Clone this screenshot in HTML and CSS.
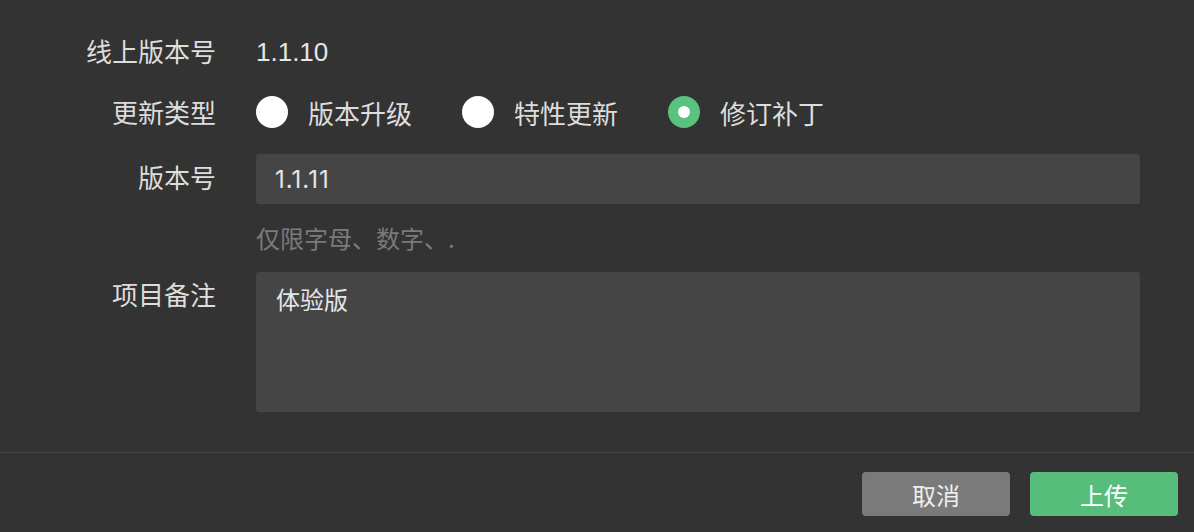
FILE: index.html
```html
<!DOCTYPE html>
<html lang="zh-CN">
<head>
<meta charset="utf-8">
<title>上传</title>
<link rel="stylesheet" href="styles.css">
</head>
<body>
<div class="dialog">
  <div class="form">
    <div class="row row-online">
      <div class="label">线上版本号</div>
      <div class="value">1.1.10</div>
    </div>
    <div class="row row-type">
      <div class="label">更新类型</div>
      <div class="radios">
        <label class="radio"><span class="dot"></span><span class="radio-text">版本升级</span></label>
        <label class="radio"><span class="dot"></span><span class="radio-text">特性更新</span></label>
        <label class="radio checked"><span class="dot"></span><span class="radio-text">修订补丁</span></label>
      </div>
    </div>
    <div class="row row-version">
      <div class="label">版本号</div>
      <div class="field">
        <input class="input" type="text" value="1.1.11">
        <div class="hint">仅限字母、数字、.</div>
      </div>
    </div>
    <div class="row row-note">
      <div class="label">项目备注</div>
      <div class="field">
        <textarea class="textarea">体验版</textarea>
      </div>
    </div>
  </div>
  <div class="footer">
    <button class="btn btn-cancel">取消</button>
    <button class="btn btn-primary">上传</button>
  </div>
</div>
</body>
</html>
```

FILE: styles.css
```css
html, body {
  margin: 0;
  padding: 0;
  background: #333333;
}
body {
  width: 1194px;
  height: 532px;
  overflow: hidden;
  font-family: "Noto Sans CJK SC", "Noto Sans", sans-serif;
  color: #e2e2e2;
}
.dialog {
  display: flex;
  flex-direction: column;
}
.form {
  display: flex;
  flex-direction: column;
  padding: 32px 54px 0 0;
}
.row {
  display: flex;
  align-items: flex-start;
  gap: 40px;
}
.label {
  width: 216px;
  flex: none;
  text-align: right;
  font-size: 26px;
  line-height: 40px;
  color: #dddddd;
}
.row-online .label {
  margin-top: -1px;
}
.row-online .value {
  font-family: "Liberation Sans", Arial, sans-serif;
  font-size: 26px;
  line-height: 40px;
  color: #e6e6e6;
}
.row-type {
  margin-top: 20px;
  margin-bottom: 2px;
}
.radios {
  display: flex;
  align-items: center;
  height: 40px;
  gap: 50px;
}
.radio {
  display: flex;
  align-items: center;
  gap: 20px;
  font-size: 26px;
  color: #dddddd;
}
.dot {
  width: 32px;
  height: 32px;
  border-radius: 50%;
  background: #ffffff;
  box-sizing: border-box;
  display: flex;
  align-items: center;
  justify-content: center;
}
.radio.checked .dot {
  background: #5ac17e;
}
.radio.checked .dot::after {
  content: "";
  width: 12px;
  height: 12px;
  border-radius: 50%;
  background: #ffffff;
}
.row-version {
  margin-top: 20px;
}
.row-version .label,
.row-note .label {
  line-height: 50px;
}
.row-version .label {
  margin-top: -2px;
}
.row-note .label {
  margin-top: -3px;
}
.field {
  flex: 1;
  display: flex;
  flex-direction: column;
}
.input {
  height: 50px;
  border: none;
  outline: none;
  border-radius: 3px;
  background: #454545;
  color: #e6e6e6;
  font-family: "Inter", "Noto Sans", sans-serif;
  font-size: 24px;
  letter-spacing: 1px;
  padding: 0 19px;
  box-sizing: border-box;
  width: 100%;
}
.hint {
  margin-top: 18px;
  font-size: 24px;
  line-height: 32px;
  color: #7b7b7b;
}
.row-note {
  margin-top: 18px;
}
.textarea {
  height: 140px;
  width: 100%;
  box-sizing: border-box;
  border: none;
  outline: none;
  resize: none;
  border-radius: 3px;
  background: #454545;
  color: #e6e6e6;
  font-family: "Noto Sans CJK SC", "Noto Sans", sans-serif;
  font-size: 24px;
  line-height: 36px;
  padding: 9px 20px;
  margin: 0;
  display: block;
}
.footer {
  margin-top: 40px;
  border-top: 1px solid #454545;
  display: flex;
  justify-content: flex-end;
  gap: 20px;
  padding: 19px 16px 0 0;
}
.btn {
  width: 148px;
  height: 44px;
  border: none;
  border-radius: 4px;
  font-family: "Noto Sans CJK SC", "Noto Sans", sans-serif;
  font-size: 24px;
  color: #ffffff;
  padding: 0;
}
.btn-cancel {
  background: #7a7a7a;
  color: #eeeeee;
}
.btn-primary {
  background: #56bd7b;
}
```
